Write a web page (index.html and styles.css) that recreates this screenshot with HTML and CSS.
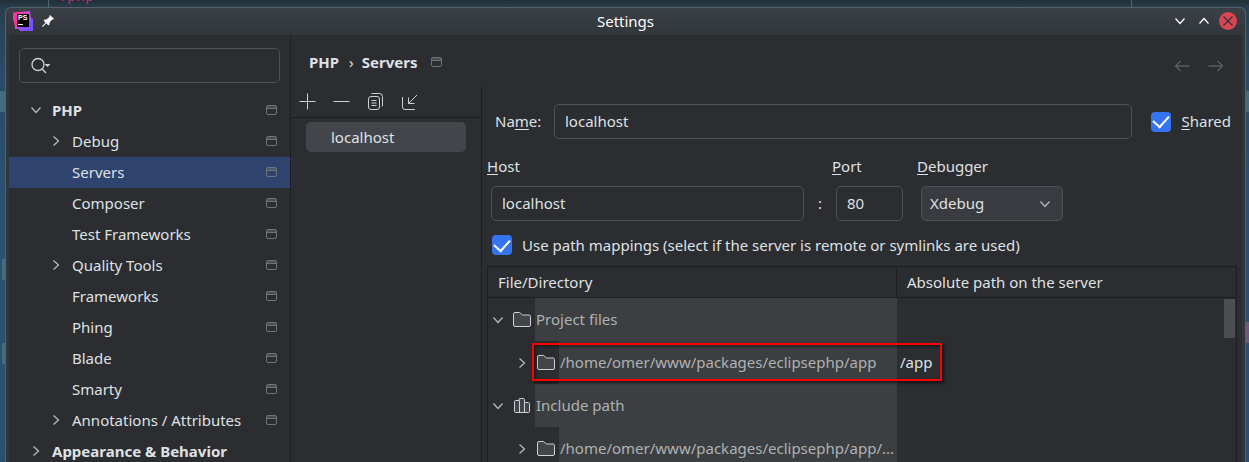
FILE: index.html
```html
<!DOCTYPE html>
<html lang="en">
<head>
<meta charset="utf-8">
<title>Settings</title>
<link rel="stylesheet" href="styles.css">
</head>
<body>
<svg class="defs" aria-hidden="true">
  <symbol id="down" viewBox="0 0 12 12"><path d="M1.500 3.500 6 8.500 10.500 3.500"/></symbol>
  <symbol id="right" viewBox="0 0 12 12"><path d="M3.500 1.500 8.500 6 3.500 10.500"/></symbol>
  <symbol id="scope" viewBox="0 0 12 12"><path fill="currentColor" fill-opacity=".45" stroke="none" d="M1 2h10v3H1z"/><rect x=".5" y="1.500" width="10" height="9" rx="1.500"/><path d="M.5 4.500h10"/></symbol>
  <symbol id="folder" viewBox="0 0 20 20"><path class="fill" d="M1.500 4q0-1.500 1.500-1.500h4.500l3 2.500h6.500q1.500 0 1.500 1.500v8.500q0 1.500-1.500 1.500H3q-1.500 0-1.500-1.500z"/></symbol>
  <symbol id="library" viewBox="0 0 20 20"><path class="fill" d="M2.500 5.500q0-1 1-1h3.500v-1q0-1 1-1h3.500q1 0 1 1v3h4q1 0 1 1v8q0 1-1 1h-13q-1 0-1-1z"/><path d="M7.500 4.500V16.500M12.500 6.500V16.500"/></symbol>
</svg>
<div class="desktop">
  <span class="code" aria-hidden="true">&lt;?php</span>
  <i class="mark wide left m1"></i><i class="mark left m2"></i><i class="mark left m3"></i>
  <i class="mark right m1"></i><i class="mark right pink m4"></i>
  <div class="window">
    <header class="titlebar">
      <div class="title-side">
        <svg class="logo" viewBox="0 0 20 20" role="img" aria-label="PhpStorm">
          <defs><linearGradient id="lg" x1="0" y1="0" x2="1" y2="0"><stop offset="0" stop-color="#ff2f8c"/><stop offset=".5" stop-color="#f739b8"/><stop offset="1" stop-color="#b24bf5"/></linearGradient>
          <linearGradient id="lb" x1="0" y1="0" x2="1" y2="0"><stop offset="0" stop-color="#d148ea"/><stop offset=".5" stop-color="#7a52fa"/></linearGradient></defs>
          <path fill="url(#lb)" d="M2 11h14V6l4 2v12H7l-1-2H2z"/>
          <path fill="url(#lg)" d="M0 1.500 17 0l1 7-4 9H2L0 8z"/>
          <rect x="4" y="3" width="12" height="13" fill="#000"/>
          <text x="5" y="9" class="logo-text">PS</text>
          <path fill="#fff" d="M5 13h5v1H5z"/>
        </svg>
        <svg class="pin" viewBox="0 0 12 12"><path fill="#fcfcfc" d="M8 0 12 3.800 11 4.600 10.300 4.500 7.700 7.200 7.300 10 6.200 10.300 4.200 8.300.7 11.900 0 11.200 3.500 7.600 1.700 5.800 2.200 4.700 4.800 4.300 7.500 1.700 7.300 1z"/></svg>
      </div>
      <h1>Settings</h1>
      <div class="title-side controls">
        <button aria-label="Minimize"><svg class="i12" viewBox="0 0 12 12"><use href="#down"/></svg></button>
        <button aria-label="Maximize"><svg class="i12 flip" viewBox="0 0 12 12"><use href="#down"/></svg></button>
        <button aria-label="Close"><svg class="close" viewBox="0 0 18 18"><circle cx="9" cy="9" r="9"/><path d="M4.500 4.500l9 9M13.500 4.500l-9 9"/></svg></button>
      </div>
    </header>
    <div class="body">
      <aside class="sidebar">
        <label class="search">
          <svg viewBox="0 0 22 18"><circle cx="8" cy="7.500" r="6"/><path d="M12.200 12 16 16"/><path class="tri" d="M14.500 7h6l-3 3z"/></svg>
          <input type="text" aria-label="Search settings">
        </label>
        <ul class="tree">
          <li class="row bold"><svg class="i12 arrow"><use href="#down"/></svg><a href="#php">PHP</a><svg class="i12 scope"><use href="#scope"/></svg></li>
          <li class="row sub"><svg class="i12 arrow"><use href="#right"/></svg><a href="#debug">Debug</a><svg class="i12 scope"><use href="#scope"/></svg></li>
          <li class="row sub selected"><span class="i12"></span><a href="#servers">Servers</a><svg class="i12 scope"><use href="#scope"/></svg></li>
          <li class="row sub"><span class="i12"></span><a href="#composer">Composer</a><svg class="i12 scope"><use href="#scope"/></svg></li>
          <li class="row sub"><span class="i12"></span><a href="#tests">Test Frameworks</a><svg class="i12 scope"><use href="#scope"/></svg></li>
          <li class="row sub"><svg class="i12 arrow"><use href="#right"/></svg><a href="#quality">Quality Tools</a><svg class="i12 scope"><use href="#scope"/></svg></li>
          <li class="row sub"><span class="i12"></span><a href="#frameworks">Frameworks</a><svg class="i12 scope"><use href="#scope"/></svg></li>
          <li class="row sub"><span class="i12"></span><a href="#phing">Phing</a><svg class="i12 scope"><use href="#scope"/></svg></li>
          <li class="row sub"><span class="i12"></span><a href="#blade">Blade</a><svg class="i12 scope"><use href="#scope"/></svg></li>
          <li class="row sub"><span class="i12"></span><a href="#smarty">Smarty</a><svg class="i12 scope"><use href="#scope"/></svg></li>
          <li class="row sub"><svg class="i12 arrow"><use href="#right"/></svg><a href="#annotations">Annotations / Attributes</a><svg class="i12 scope"><use href="#scope"/></svg></li>
          <li class="row bold"><svg class="i12 arrow"><use href="#right"/></svg><a href="#appearance">Appearance &amp; Behavior</a></li>
        </ul>
      </aside>
      <main class="main">
        <div class="crumbs">
          <a href="#php">PHP</a><span class="sep">›</span><a href="#servers">Servers</a><svg class="i12 scope"><use href="#scope"/></svg>
          <div class="nav">
            <button aria-label="Back"><svg viewBox="0 0 16 12"><path d="M15.500 6H1.500M6.500 1 1.500 6l5 5"/></svg></button>
            <button aria-label="Forward"><svg viewBox="0 0 16 12"><path d="M.5 6h14M9.500 1l5 5-5 5"/></svg></button>
          </div>
        </div>
        <div class="split">
          <section class="servers">
            <div class="toolbar">
              <button aria-label="Add"><svg viewBox="0 0 20 20"><path d="M10.500 2.500v16M2.500 10.500h16"/></svg></button>
              <button aria-label="Remove"><svg viewBox="0 0 20 20"><path d="M2.500 10.500h16"/></svg></button>
              <button aria-label="Copy"><svg viewBox="0 0 20 20"><rect x="3.500" y="5.500" width="11" height="13" rx="2.500"/><path d="M6 3q.5-.5 1.500-.5h7q3 0 3 3V14q0 1-.5 1.500M6.500 9.500h5M6.500 12h5M6.500 14.500h5"/></svg></button>
              <button aria-label="Import"><svg viewBox="0 0 20 20"><path d="M3.500 6v10q0 2.500 2.500 2.500h10M18 4 9.500 12.500M9.500 6.500v6h6"/></svg></button>
            </div>
            <ul class="list"><li>localhost</li></ul>
          </section>
          <form class="form">
            <div class="name-row">
              <label for="name">Na<u>m</u>e:</label>
              <input class="text" id="name" type="text" value="localhost">
              <label class="check"><input type="checkbox" checked><span><u>S</u>hared</span></label>
            </div>
            <div class="host-row">
              <div class="field grow"><label for="host"><u>H</u>ost</label><input class="text" id="host" type="text" value="localhost"></div>
              <span class="colon">:</span>
              <div class="field port"><label for="port"><u>P</u>ort</label><input class="text" id="port" type="text" value="80"></div>
              <div class="field debugger"><label for="debugger"><u>D</u>ebugger</label>
                <div class="select"><select id="debugger"><option>Xdebug</option></select><svg class="i12 arrow"><use href="#down"/></svg></div></div>
            </div>
            <label class="check mapping"><input type="checkbox" checked><span>Use path mappings (select if the server is remote or symlinks are used)</span></label>
            <div class="table-box">
              <table>
                <colgroup><col class="c1"><col></colgroup>
                <thead><tr><th>File/Directory</th><th>Absolute path on the server</th></tr></thead>
                <tbody>
                  <tr><td><div class="cell"><svg class="i12 arrow"><use href="#down"/></svg><svg class="i20"><use href="#folder"/></svg><span>Project files</span></div></td><td></td></tr>
                  <tr><td><div class="cell child"><svg class="i12 arrow"><use href="#right"/></svg><svg class="i20"><use href="#folder"/></svg><span>/home/omer/www/packages/eclipsephp/app</span></div></td><td>/app</td></tr>
                  <tr><td><div class="cell"><svg class="i12 arrow"><use href="#down"/></svg><svg class="i20"><use href="#library"/></svg><span>Include path</span></div></td><td></td></tr>
                  <tr><td><div class="cell child"><svg class="i12 arrow"><use href="#right"/></svg><svg class="i20"><use href="#folder"/></svg><span>/home/omer/www/packages/eclipsephp/app/...</span></div></td><td></td></tr>
                </tbody>
              </table>
              <i class="scrollbar"></i>
              <i class="highlight"></i>
            </div>
          </form>
        </div>
      </main>
    </div>
  </div>
</div>
</body>
</html>
```
FILE: styles.css
```css
* { box-sizing: border-box; }
body { margin: 0; font: 15px/20px "Noto Sans", sans-serif; color: #dfe1e5; background: #2b2d30; }
ul { list-style: none; margin: 0; padding: 0; }
a { color: inherit; text-decoration: none; }
button { padding: 0; border: 0; background: none; color: inherit; display: grid; place-items: center; }
input, select { font: inherit; color: inherit; margin: 0; }
u { text-underline-offset: 2px; text-decoration-skip-ink: none; }
svg { display: block; flex: none; fill: none; stroke: currentColor; }
.defs { position: absolute; width: 0; height: 0; }
.i12 { width: 12px; height: 12px; flex: none; }
.i20 { width: 20px; height: 20px; color: #ced0d6; }
.fill { fill: #43454a; }
.arrow { color: #b4b8bf; stroke-width: 1.3; }
.scope { color: #6f737a; }

.desktop {
  position: relative; height: 100vh; overflow: hidden; padding: 7px 3px 0 5px;
  background: linear-gradient(#222e36, #28404f 8px, #2c4a66 70px, #2b5070 200px, #2c4f70);
}
.desktop::before { content: ""; position: absolute; top: 0; left: 48px; right: 117px; height: 8px; border: solid #4f6675; border-width: 0 1px; }
.code { position: absolute; left: 49px; top: -14px; font: 15px/20px "DejaVu Sans Mono", monospace; color: #c02a70; }
.mark { position: absolute; width: 3px; height: 21px; background: #456c7e; }
.wide { width: 5px; }
.left { left: 2px; }
.wide.left { left: 0; }
.right { right: 0; }
.pink { background: #70577f; }
.m1 { top: 91px; } .m2 { top: 259px; } .m3 { top: 343px; } .m4 { top: 322px; }

.window { position: relative; display: flex; flex-direction: column; height: 100%; padding: 0 3px; border: 1px solid #586068; border-bottom: 0; border-radius: 6px 6px 0 0; background: linear-gradient(#3b4047, #31363b 27px); }
.titlebar { display: grid; grid-template-columns: 1fr auto 1fr; align-items: center; height: 27px; flex: none; }
.titlebar h1 { margin: 0; padding-bottom: 2px; font-size: 15px; font-weight: 400; color: #fcfcfc; }
.title-side { display: flex; align-items: center; gap: 9px; padding: 0 0 2px 4px; }
.controls { justify-content: flex-end; gap: 12px; padding: 0 5px 2px 0; color: #fcfcfc; stroke-width: 1.3; }
.controls button:last-child { margin-left: -3px; }
.flip { transform: rotate(180deg); }
.logo { width: 20px; height: 20px; stroke: none; }
.logo-text { font: bold 7px "Liberation Sans", sans-serif; fill: #fff; }
.pin { width: 12px; height: 12px; stroke: none; }
.close { width: 18px; height: 18px; stroke: #31363b; }
.close circle { fill: #da4453; stroke: none; }

.body { display: flex; flex: 1; min-height: 0; overflow: hidden; background: #2b2d30; }
.sidebar { width: 282px; flex: none; padding-top: 13px; border-right: 1px solid #1e1f22; }
.search { display: flex; align-items: center; height: 35px; margin: 0 10px 12px; padding-left: 10px; border: 1px solid #4e5157; border-radius: 5px; }
.search svg { width: 22px; height: 18px; color: #ced0d6; stroke-width: 1.3; }
.search .tri { fill: currentColor; stroke: none; }
.search input { flex: 1; min-width: 0; border: 0; outline: 0; background: none; }
.row { display: flex; align-items: center; gap: 10px; height: 31px; padding: 0 12px 2px 21px; }
.row a { flex: 1; white-space: nowrap; }
.sub { padding-left: 41px; }
.bold, .crumbs { font-weight: 700; }
.selected { background: #2e436e; }

.main { flex: 1; min-width: 0; display: flex; flex-direction: column; }
.crumbs { display: flex; align-items: center; height: 52px; flex: none; padding: 1px 18px 0 18px; }
.sep { padding: 0 8px 0 10px; font-weight: 400; }
.crumbs .scope { margin-left: 14px; }
.nav { display: flex; gap: 18px; margin-left: auto; padding-top: 8px; color: #5a5d63; }
.nav svg { width: 16px; height: 12px; stroke-width: 1.3; }
.split { display: flex; flex: 1; min-height: 0; }
.servers { width: 191px; flex: none; border-right: 1px solid #1e1f22; }
.toolbar { display: flex; gap: 10px; height: 31px; padding-left: 4px; border-bottom: 1px solid #1e1f22; color: #ced0d6; }
.toolbar button { width: 24px; height: 28px; }
.toolbar svg { width: 20px; height: 20px; }
.list { padding: 4px 15px; }
.list li { height: 30px; padding-left: 25px; border-radius: 5px; background: #43454a; line-height: 30px; }

.form { flex: 1; min-width: 0; padding: 17px 5px 0; }
.text, select { height: 35px; min-width: 0; width: 100%; padding: 0 10px 2px; border: 1px solid #4e5157; border-radius: 5px; background: #2b2d30; outline: 0; }
.name-row { display: flex; align-items: center; padding: 0 6px 0 8px; }
.name-row > label:first-child { flex: none; width: 59px; padding-bottom: 2px; }
.name-row .text { flex: 1; margin-right: 19px; }
.name-row span { padding: 1px 0; margin-top: -2px; }
.check { display: flex; align-items: center; gap: 10px; }
.check input { appearance: none; display: grid; place-items: center; width: 20px; height: 20px; border-radius: 4px; background: #3574f0; flex: none; }
.check input:checked::after { content: ""; width: 8px; height: 13px; margin-bottom: 4px; border: solid #fff; border-width: 0 2px 2px 0; transform: rotate(42deg); }
.host-row { display: flex; align-items: flex-end; padding: 17px 174px 0 0; }
.field label { display: block; height: 30px; line-height: 20px; }
.field .text, .select { display: block; margin-left: 4px; width: calc(100% - 4px); }
.grow { flex: 1; min-width: 0; }
.colon { width: 28px; line-height: 35px; text-align: center; padding-left: 4px; }
.port { width: 71px; }
.debugger { width: 146px; margin-left: 14px; }
.select { position: relative; }
.select select { display: block; appearance: none; padding: 0 8px 2px; background: #393b40; }
.select .arrow { position: absolute; right: 12px; top: 12px; }
.mapping { margin: 14px 0 11px 5px; }

.table-box { position: relative; height: 210px; border: 1px solid #1e1f22; }
table { width: 100%; table-layout: fixed; border-spacing: 0; }
.c1 { width: 409px; }
th { height: 31px; padding: 0 10px; border-bottom: 1px solid #1e1f22; text-align: left; font-weight: 400; }
th:first-child { border-right: 1px solid #1e1f22; }
td { height: 43px; padding: 0 3px 2px; }
td:first-child { padding: 0; }
.cell { display: flex; align-items: center; height: 43px; padding-left: 4px; color: #afb1b3; }
.cell .i20 { margin: 0 3px 0 8px; }
.cell span { flex: 1; align-self: stretch; padding-left: 1px; line-height: 43px; white-space: nowrap; background: #3c3f41; }
.child { padding-left: 28px; }
.scrollbar { position: absolute; right: 1px; top: 32px; width: 11px; height: 39px; background: #4d4e51; }
.highlight { position: absolute; left: 44px; top: 76px; width: 410px; height: 38px; border: 2px solid #f00; box-shadow: 2px 2px 3px #0009, inset 2px 2px 3px #0006; }
```
